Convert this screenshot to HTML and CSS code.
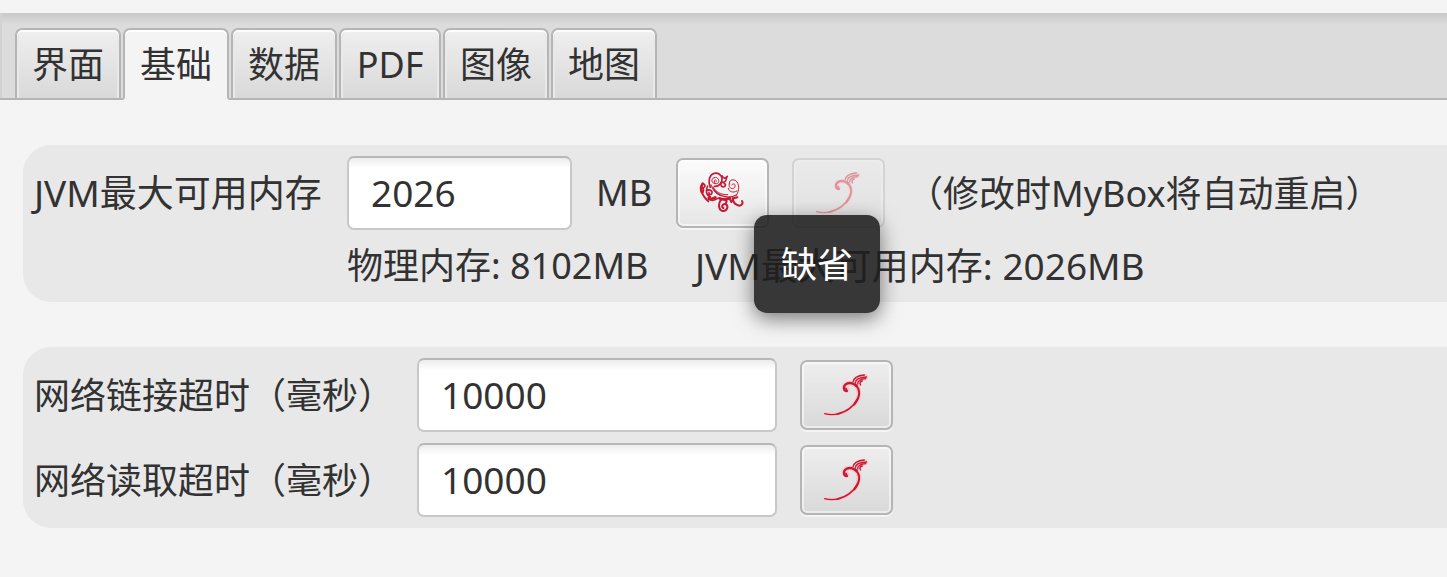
FILE: index.html
```html
<!DOCTYPE html>
<html lang="zh-CN">
<head>
<meta charset="utf-8">
<title>MyBox</title>
<link rel="stylesheet" href="styles.css">
</head>
<body>
<svg class="defs" aria-hidden="true">
  <symbol id="curl" viewBox="100 65 135 135">
    <g fill="none" stroke-linecap="round" stroke-linejoin="round">
      <g stroke="#ffc4c4">
        <path stroke-width="14" d="M173 118C164 121 160 111 165 104C173 95 196 96 206 116C211 132 206 146 196 160"/>
        <path stroke-width="9" d="M200 155C186 174 165 188 142 192L106 190"/>
        <path stroke-width="12" d="M193 94C197 84 210 77 228 77M206 102C208 92 218 85 228 84"/>
      </g>
      <g stroke="#c31a35">
        <path stroke-width="7" d="M171 122C162 121 160 109 167 103C177 95 192 97 201 108"/>
        <path stroke-width="6" d="M198 103C214 121 210 142 194 162"/>
        <path stroke-width="5" d="M204 145C193 168 169 187 142 191"/>
        <path stroke-width="4" d="M150 190C134 194 119 194 105 190"/>
        <path stroke-width="4" d="M190 95C192 82 203 76 224 74M197 98C197 86 210 81 231 80M204 101C203 92 213 86 228 85M213 104C209 98 211 94 218 92"/>
      </g>
      <path stroke="#c31a35" stroke-width="5" d="M169 114L172 122"/>
    </g>
  </symbol>
  <symbol id="rose" viewBox="90 70 135 126">
    <g fill="none" stroke="#c31a35" stroke-linecap="round" stroke-linejoin="round">
      <path stroke-width="3" d="M139 108C127 108 125 94 135 90C147 86 154 100 146 107C141 110 134 106 136 99C137 95 143 96 142 101"/>
      <path stroke-width="5" d="M124 119C116 101 121 81 136 77C147 74 158 82 159 92C161 105 149 117 137 116"/>
      <path stroke-width="5" d="M160 85C163 93 172 94 175 86M172 88C174 98 168 105 160 104C153 104 153 116 163 118C171 117 171 108 166 108"/>
      <path stroke-width="3" d="M182 109C178 98 190 94 199 98C212 107 212 129 202 143M181 107C176 120 191 128 197 119C202 109 192 105 188 112M178 122C179 132 192 137 204 130"/>
      <path stroke-width="4" d="M132 118C136 132 151 143 168 147C182 150 193 147 202 142"/>
      <path stroke-width="3" d="M126 111C130 128 142 139 155 144M137 125C145 136 161 142 176 141"/>
      <path stroke-width="8" d="M101 108C95 117 95 126 99 134"/>
      <path stroke-width="6" d="M99 132C101 146 110 153 118 161"/>
      <path stroke-width="5" d="M100 110C107 106 111 115 105 119M101 134C105 128 104 124 101 120M116 115C109 129 111 142 124 147M114 129C121 123 133 130 128 138C125 142 119 139 120 135M119 155C130 161 139 157 146 152"/>
      <path stroke-width="8" d="M119 151C126 155 136 151 139 149M151 152C162 157 174 155 182 151"/>
      <path stroke-width="6" d="M156 156C147 169 148 185 160 190C174 192 181 174 169 169C160 168 156 178 163 181M191 151C191 163 198 171 211 174C219 174 223 166 219 160"/>
      <path stroke-width="6" d="M182 152L187 163L194 152L205 149M167 156L173 161L170 169"/>
    </g>
  </symbol>
</svg>

<nav class="tabs" role="tablist">
  <button class="tab" role="tab">界面</button>
  <button class="tab tab-active" role="tab" aria-selected="true">基础</button>
  <button class="tab" role="tab">数据</button>
  <button class="tab" role="tab">PDF</button>
  <button class="tab" role="tab">图像</button>
  <button class="tab" role="tab">地图</button>
</nav>

<main class="content">
  <section class="panel">
    <div class="row memory-row">
      <label class="memory-label mixed" for="jvm">JVM最大可用内存</label>
      <input class="field field-short" id="jvm" type="text" value="2026">
      <span class="unit">MB</span>
      <div class="actions">
        <div class="tip-anchor">
          <button class="icon-button icon-button-hover" aria-label="缺省" aria-describedby="tip"><svg class="rose"><use href="#rose"/></svg></button>
          <div class="tooltip" id="tip" role="tooltip">缺省</div>
        </div>
        <button class="icon-button" aria-label="恢复" disabled><svg class="curl"><use href="#curl"/></svg></button>
      </div>
      <span class="note">（修改时MyBox将自动重启）</span>
    </div>
    <div class="info">
      <span class="physical">物理内存: 8102MB</span>
      <span class="mixed">JVM最大可用内存: 2026MB</span>
    </div>
  </section>

  <section class="panel">
    <div class="row">
      <label class="timeout-label" for="connect">网络链接超时（毫秒）</label>
      <input class="field field-long" id="connect" type="text" value="10000">
      <button class="icon-button" aria-label="恢复"><svg class="curl"><use href="#curl"/></svg></button>
    </div>
    <div class="row">
      <label class="timeout-label" for="read">网络读取超时（毫秒）</label>
      <input class="field field-long" id="read" type="text" value="10000">
      <button class="icon-button" aria-label="恢复"><svg class="curl"><use href="#curl"/></svg></button>
    </div>
  </section>
</main>
</body>
</html>
```
FILE: styles.css
```css
* { box-sizing: border-box; }

body {
  margin: 0;
  padding-top: 13px;
  background: #f4f4f4;
  color: #323232;
  font: 36px/50px "Noto Sans", "Noto Sans CJK SC", sans-serif;
  white-space: nowrap;
  overflow: hidden;
}

button, input { font: inherit; color: inherit; margin: 0; }

.defs { display: none; }

.tabs {
  display: flex;
  gap: 2px;
  padding: 15px 15px 0;
  background: linear-gradient(#c9c9c9, #dcdcdc 12px);
  box-shadow: inset 0 -2px #b5b5b5, inset 2px 0 #d2d2d2;
}

.tab {
  min-width: 102px;
  height: 72px;
  padding: 2px 15px 0;
  border: 2px solid #b5b5b5;
  border-radius: 7px 7px 0 0;
  background: linear-gradient(#efefef, #d9d9d9);
  box-shadow: inset 0 2px #fcfcfc, inset 2px 0 #e9e9e9, inset -2px 0 #e9e9e9;
}

.tab-active {
  border-bottom-color: #f4f4f4;
  background: #f4f4f4;
  box-shadow: inset 0 2px #fff;
}

.content {
  display: grid;
  gap: 45px;
  padding: 45px 0 0 23px;
}

.panel {
  display: grid;
  gap: 11px;
  padding: 11px;
  border-radius: 28px 0 0 28px;
  background: #e8e8e8;
}

.row { display: flex; align-items: center; }

.mixed { font-size: 37px; }

.memory-label { width: 313px; }

.timeout-label { width: 383px; padding-top: 2px; }

.field {
  height: 74px;
  padding: 0 22px 2px;
  border: 2px solid #c8c8c8;
  border-top-color: #b8b8b8;
  border-radius: 7px;
  outline: 0;
  background: linear-gradient(#ececec, #fff 10px);
  font-size: 37px;
}

.field-short { width: 225px; margin-right: 24px; }

.field-long { width: 360px; margin-right: 23px; }

.unit { width: 80px; }

.actions { display: flex; gap: 23px; margin-right: 22px; }

.note { padding-top: 2px; }

.icon-button {
  display: flex;
  align-items: center;
  justify-content: center;
  width: 93px;
  height: 70px;
  padding: 0 2px 2px 0;
  border: 2px solid #b5b5b5;
  border-radius: 7px;
  background: linear-gradient(#eee, #d9d9d9);
  box-shadow: inset 0 0 0 2px rgba(255, 255, 255, .5), 0 2px #f4f4f4;
}

.icon-button-hover { background: linear-gradient(#fbfbfb, #e6e6e6); }

.icon-button:disabled { opacity: .4; }

.curl { width: 45px; height: 45px; }

.rose { width: 45px; height: 42px; }

.tip-anchor { position: relative; }

.tooltip {
  position: absolute;
  z-index: 1;
  top: 57px;
  left: 78px;
  padding: 25px 27px 23px;
  border-radius: 13px;
  background: rgba(30, 30, 30, .88);
  box-shadow: 0 6px 20px rgba(0, 0, 0, .5);
  color: #fff;
}

.info {
  display: flex;
  padding-left: 313px;
}

.physical { width: 348px; }
```
